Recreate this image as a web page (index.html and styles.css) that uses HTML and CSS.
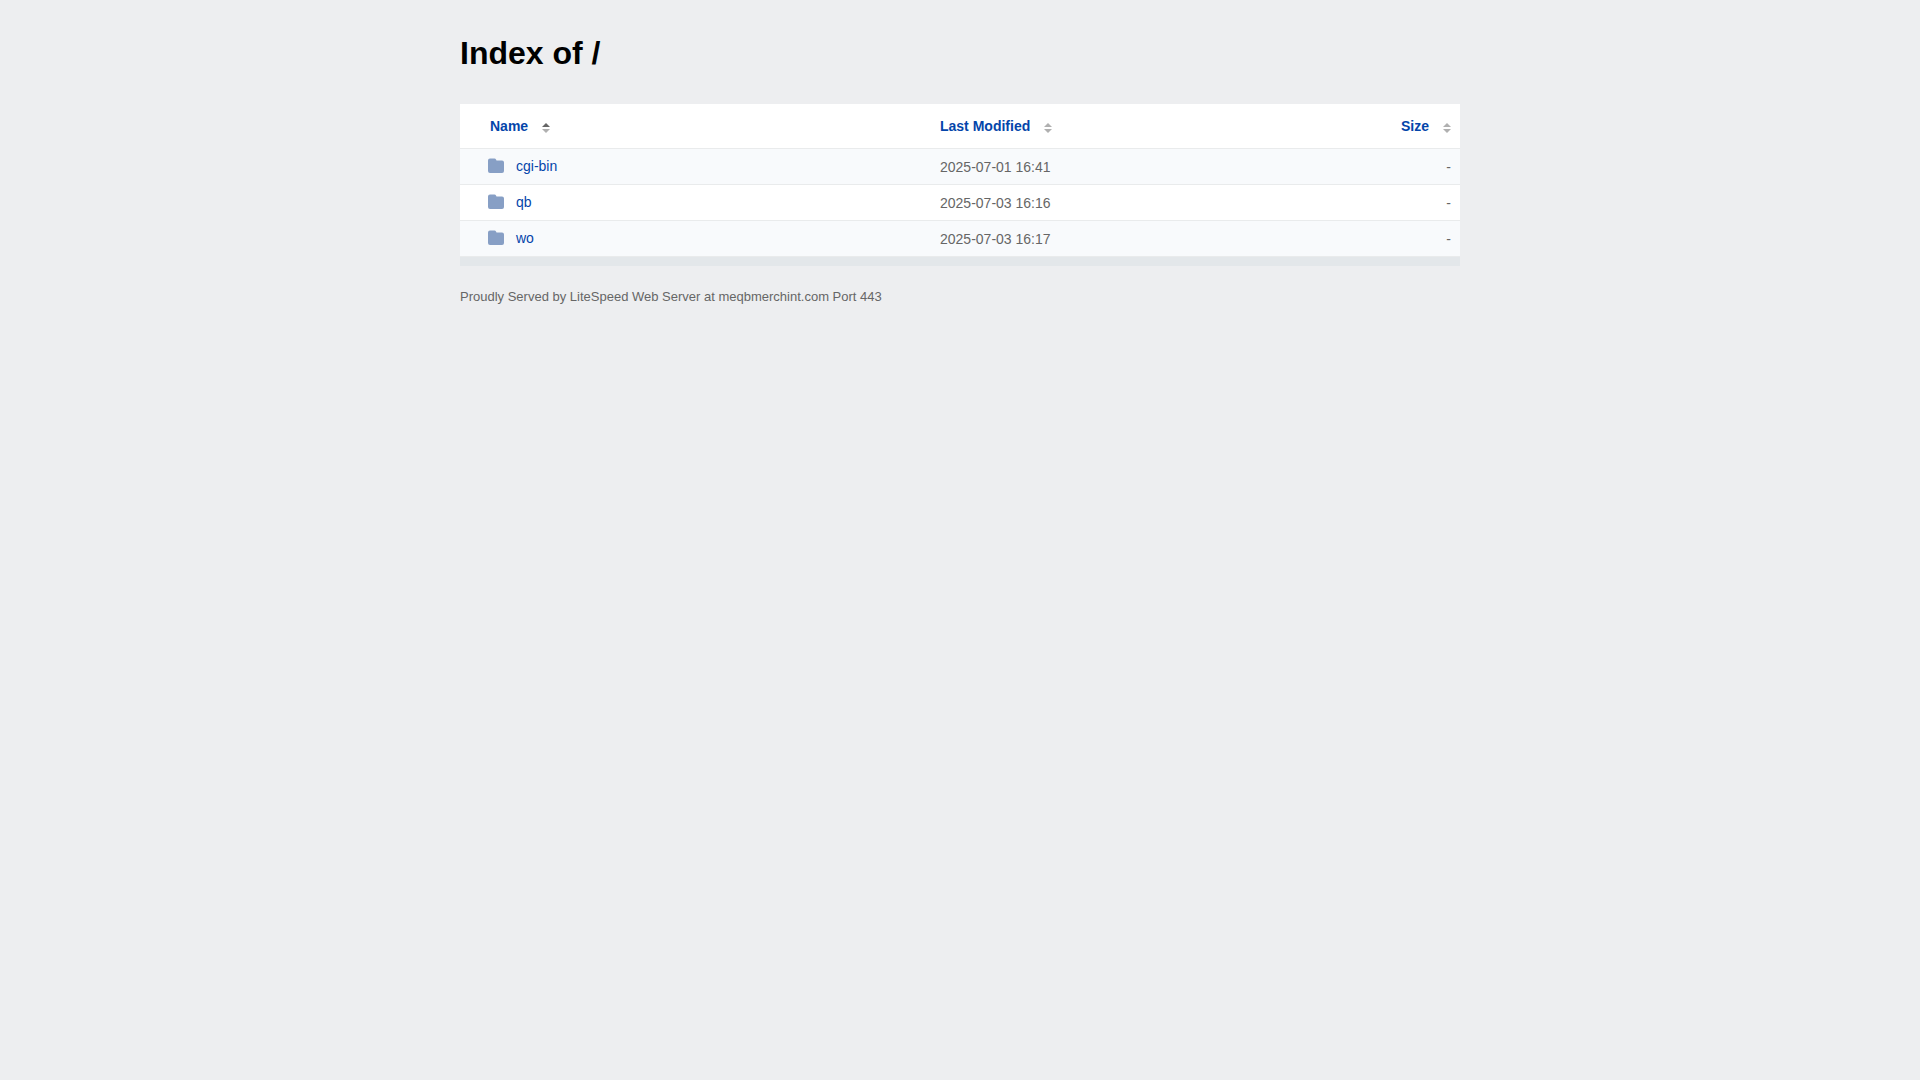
FILE: index.html
```html
<!DOCTYPE html>
<html lang="en">
<head>
    <meta charset="UTF-8">
    <meta name="viewport" content="width=device-width, initial-scale=1.0">
    <title>Index of /</title>
    <link rel="stylesheet" href="styles.css">
</head>
<body>

    <!-- Shared icons -->
    <svg class="sprite" aria-hidden="true">
        <symbol id="folder" viewBox="0 0 16 14">
            <path d="M2 0h4.500q1 0 1.500 1l.5 1h5.500a2 2 0 0 1 2 2v8.500a2 2 0 0 1-2 2H2a2 2 0 0 1-2-2V2a2 2 0 0 1 2-2z"/>
        </symbol>
        <symbol id="sort" viewBox="0 0 8 10">
            <path class="up" d="M0 4l4-4 4 4z"/>
            <path d="M0 6h8l-4 4z"/>
        </symbol>
    </svg>

    <div class="content">
        <h1>Index of /</h1>

        <table class="file-list">
            <thead>
                <tr>
                    <th class="name sorted"><a href="#">Name<svg class="sort-icon"><use href="#sort"/></svg></a></th>
                    <th class="modified"><a href="#">Last Modified<svg class="sort-icon"><use href="#sort"/></svg></a></th>
                    <th class="size"><a href="#">Size<svg class="sort-icon"><use href="#sort"/></svg></a></th>
                </tr>
            </thead>
            <tbody>
                <tr>
                    <td class="name"><a href="#"><svg class="folder-icon"><use href="#folder"/></svg>cgi-bin</a></td>
                    <td class="modified">2025-07-01 16:41</td>
                    <td class="size">-</td>
                </tr>
                <tr>
                    <td class="name"><a href="#"><svg class="folder-icon"><use href="#folder"/></svg>qb</a></td>
                    <td class="modified">2025-07-03 16:16</td>
                    <td class="size">-</td>
                </tr>
                <tr>
                    <td class="name"><a href="#"><svg class="folder-icon"><use href="#folder"/></svg>wo</a></td>
                    <td class="modified">2025-07-03 16:17</td>
                    <td class="size">-</td>
                </tr>
            </tbody>
        </table>

        <footer>Proudly Served by LiteSpeed Web Server at meqbmerchint.com Port 443</footer>
    </div>

</body>
</html>
```

FILE: styles.css
```css
/* General Styles */
* {
    box-sizing: border-box;
}

body {
    margin: 0;
    padding: 33px 20px;
    font-family: "Liberation Sans", Arial, sans-serif;
    font-size: 14px;
    line-height: 20px;
    background-color: #edeef0;
    color: #666;
}

.sprite {
    display: none;
}

.content {
    max-width: 1000px;
    margin: 0 auto;
}

h1 {
    margin: 0 0 31px;
    font-size: 32px;
    line-height: 40px;
    color: #000;
}

a {
    color: #0445aa;
    text-decoration: none;
}

a:hover {
    color: #2a87ff;
}

/* File List */
.file-list {
    width: 100%;
    table-layout: fixed;
    border-collapse: separate;
    border-spacing: 0;
    background-color: #fff;
    border-bottom: 9px solid #e3e7ea;
}

th,
td {
    height: 36px;
    padding: 0 10px;
    border-bottom: 1px solid #e9ebec;
    text-align: left;
}

th {
    height: 45px;
}

th.name {
    width: 47%;
    padding-left: 30px;
}

td.name {
    padding-left: 28px;
}

th.size {
    width: 16%;
}

th.size,
td.size {
    padding-right: 9px;
    text-align: right;
}

th a,
td a {
    display: inline-flex;
    align-items: center;
}

td a {
    padding-top: 1px;
}

tbody tr:nth-child(odd) {
    background-color: #f8fafc;
}

/* Icons */
.sort-icon {
    width: 8px;
    height: 10px;
    margin: 3px 0 0 14px;
    fill: #b0b0b0;
}

.sorted .sort-icon {
    --up: #666;
}

.up {
    fill: var(--up, #b0b0b0);
}

.folder-icon {
    width: 16px;
    height: 15px;
    margin-right: 12px;
    fill: #879fc5;
}

footer {
    padding-top: 21px;
    font-size: 13px;
}
```
